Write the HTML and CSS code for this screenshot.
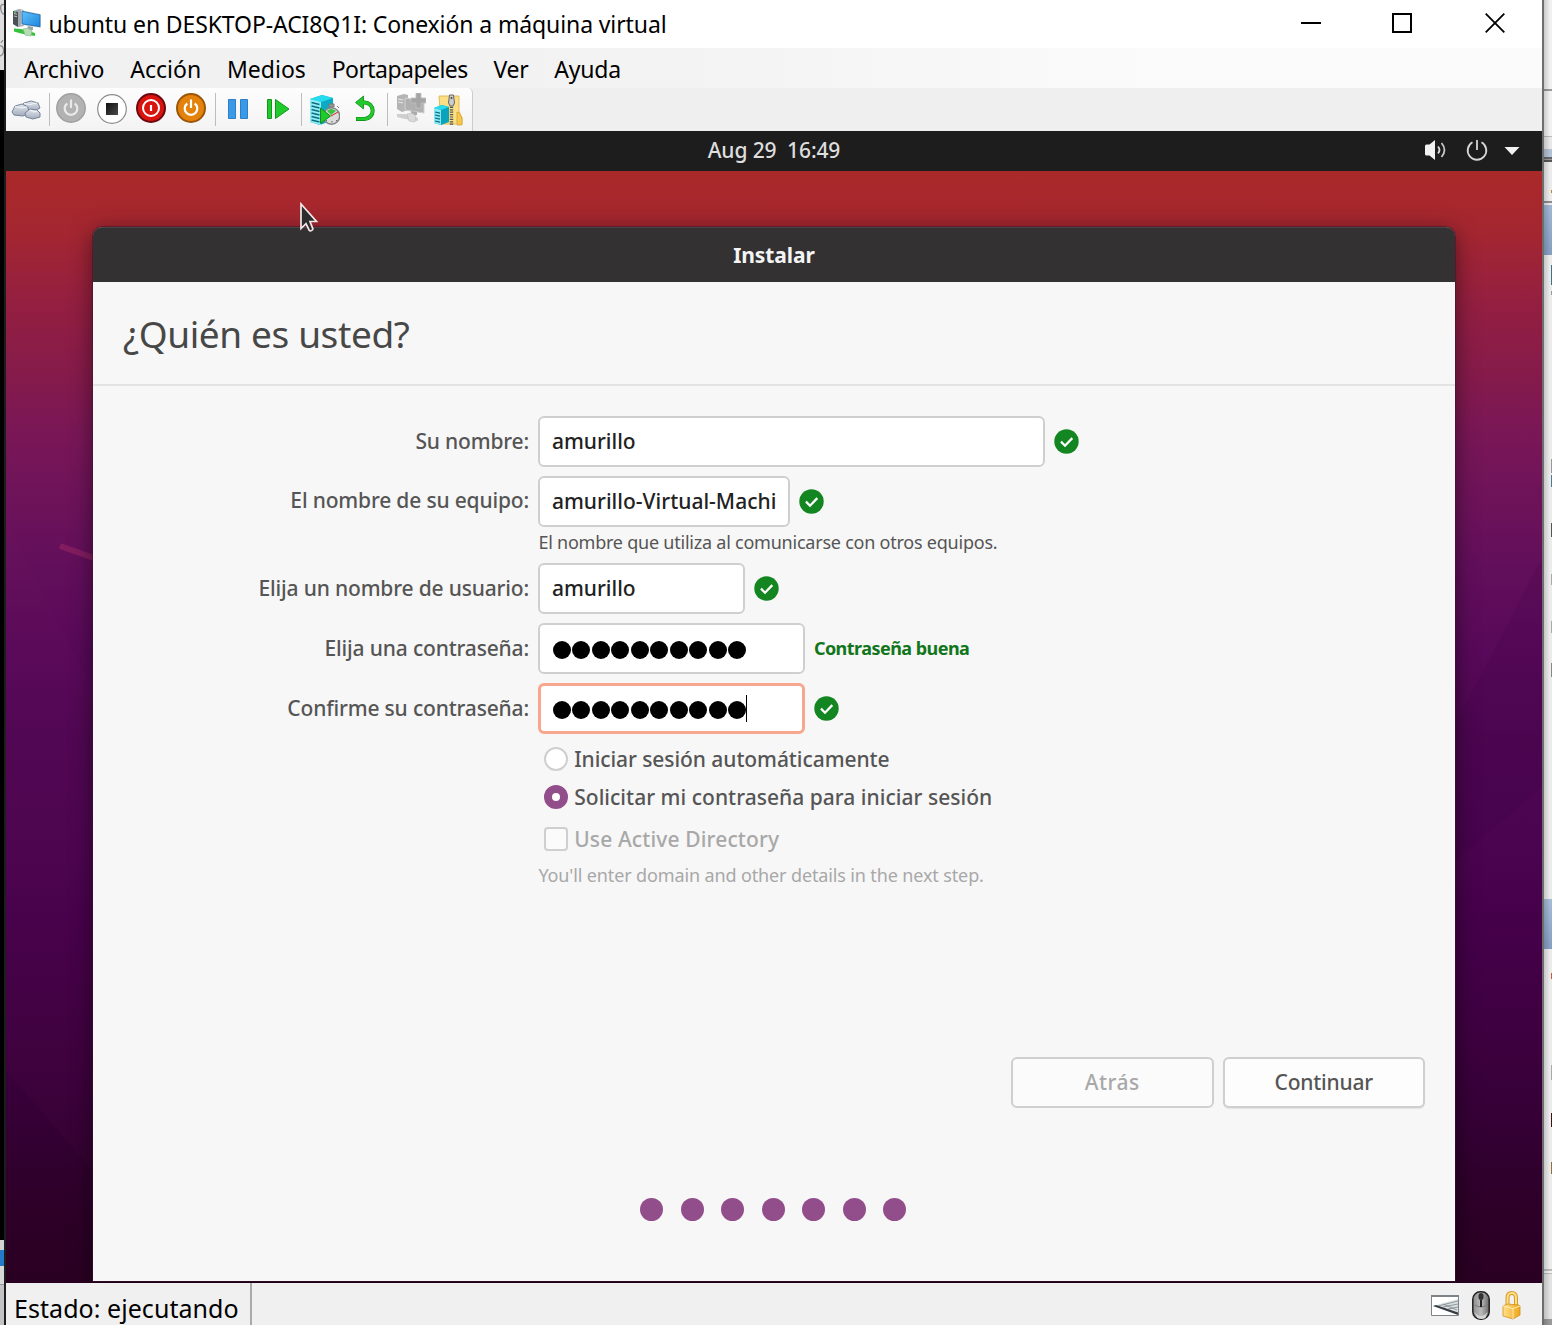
FILE: index.html
```html
<!DOCTYPE html>
<html lang="es">
<head>
<meta charset="utf-8">
<title>ubuntu en DESKTOP-ACI8Q1I: Conexión a máquina virtual</title>
<link rel="stylesheet" href="styles.css">
</head>
<body>
<svg class="defs" aria-hidden="true">
  <defs>
    <linearGradient id="screen" x1="0" y1="0" x2="1" y2="1"><stop offset="0" stop-color="#63c1fa"/><stop offset="1" stop-color="#1c86e0"/></linearGradient>
    <linearGradient id="gold" x1="0" x2="1"><stop offset="0" stop-color="#ffe08a"/><stop offset="1" stop-color="#f0a51c"/></linearGradient>
    <linearGradient id="steel" x1="0" x2="1"><stop offset="0" stop-color="#8d8d8d"/><stop offset=".5" stop-color="#bcbcbc"/><stop offset="1" stop-color="#6a6a6a"/></linearGradient>
    <linearGradient id="rock" x1="0" y1="0" x2="0" y2="1"><stop offset="0" stop-color="#e4e8ef"/><stop offset="1" stop-color="#a3acbc"/></linearGradient>
    <linearGradient id="stopfill" x1="0" y1="0" x2="1" y2="1"><stop offset="0" stop-color="#111"/><stop offset="1" stop-color="#4a4a4a"/></linearGradient>
    <symbol id="check" viewBox="0 0 25 25"><circle cx="12.5" cy="12.5" r="12.2" fill="#138622"/><path d="M7 12.6l4 4.1 7.3-7.6" fill="none" stroke="#fff" stroke-width="2.3"/></symbol>
  </defs>
</svg>
<div class="screen">
  <div class="behind behind-left">
    <div class="peek"><svg width="4" height="70" viewBox="0 0 4 70"><path d="M4 4.500Q0 4 .8 9T4 14M0 46q3-1 3.500 4T0 56M1 43l2-3" fill="none" stroke="#8a8a8a" stroke-width="1.300"/></svg></div>
    <div class="black"></div>
    <div class="pale"></div>
    <div class="blue"></div>
    <div class="pale2"></div>
    <div class="grey"></div>
  </div>
  <main class="window">
    <header class="titlebar">
      <svg class="app-icon" width="28" height="28" viewBox="0 0 28 28">
        <path d="M0 2l6-2 5 1v16l-6 1-5-3z" fill="#a3a9ad"/><path d="M0 2l5 1v15l-5-3z" fill="#4a5054"/><path d="M1 4.500l3 .7M1 7l3 .7" stroke="#b8c4ca" stroke-width="1"/><circle cx="2" cy="3" r=".8" fill="#6f6"/>
        <path d="M8 1l20 4v14l-20-3z" fill="#d5dde2"/><path d="M9 2.300l18 3.600v11.800l-18-2.800z" fill="url(#screen)" stroke="#1766a8" stroke-width=".8"/>
        <path d="M15 17l5 1v3h-6z" fill="#9aa3a8"/>
        <path d="M1 19.500l7 .5 14 4v3l-14-2.500-7-2z" fill="#35c13c"/><path d="M10 20l5-1 4 3-1 5-6-1z" fill="#b5dcb2" stroke="#7fb47d" stroke-width=".6"/>
      </svg>
      <h1><span class="t t-title">ubuntu en DESKTOP-ACI8Q1I: Conexión a máquina virtual</span></h1>
      <div class="controls">
        <svg width="20" height="20" viewBox="0 0 20 20"><path d="M0 10h20" stroke="#000" stroke-width="2"/></svg>
        <svg width="20" height="20" viewBox="0 0 20 20"><path d="M1 1h18v18H1z" fill="none" stroke="#000" stroke-width="2"/></svg>
        <svg width="20" height="20" viewBox="0 0 20 20"><path d="M.7.700l18.600 18.600M19.300.700L.7 19.300" stroke="#000" stroke-width="1.800"/></svg>
      </div>
    </header>
    <nav class="menubar">
      <span class="t t-archivo">Archivo</span><span class="t t-accion">Acción</span><span class="t t-medios">Medios</span><span class="t t-porta">Portapapeles</span><span class="t t-ver">Ver</span><span class="t t-ayuda">Ayuda</span>
    </nav>
    <div class="toolbar">
      <div class="tools">
        <svg class="i-keys" width="30" height="30" viewBox="0 0 30 30"><g fill="url(#rock)" stroke="#76839a" stroke-width="1" stroke-linejoin="round"><path d="M11 11l2-2 7-2 7 2 2 5-6 3-11-2z"/><path d="M1 18l3-6 7-2 6 3 1 6-6 3-9-1z"/><path d="M14 19l5-4 7 1 3 3v4l-7 2-7-2z"/></g><path d="M4 12.500l7 1.500 5-1M13 9.500l6 1 7-1.500M19 16l4 2 3-1" fill="none" stroke="#f3f6fa" stroke-width="1"/></svg>
        <i class="sep s1"></i>
        <svg class="i-start" width="30" height="30" viewBox="0 0 30 30"><circle cx="15" cy="15" r="14.200" fill="#b2b2b2" stroke="#a0a0a0" stroke-width="1.500"/><path d="M11.300 10.500a6.300 6.300 0 1 0 7.400 0M15 6.500v8.500" fill="none" stroke="#e9e9e9" stroke-width="2.200"/></svg>
        <svg class="i-stop" width="30" height="30" viewBox="0 0 30 30"><circle cx="15" cy="15" r="14.300" fill="#fff" stroke="#8c8c8c" stroke-width="1.200"/><path d="M9 9h12v12H9z" fill="url(#stopfill)"/></svg>
        <svg class="i-off" width="30" height="30" viewBox="0 0 30 30"><circle cx="15" cy="15" r="14" fill="#d9140e" stroke="#6d0710" stroke-width="2"/><circle cx="15" cy="15" r="8" fill="none" stroke="#fff" stroke-width="2"/><path d="M15 12v6" stroke="#fff" stroke-width="2.200"/></svg>
        <svg class="i-save" width="30" height="30" viewBox="0 0 30 30"><circle cx="15" cy="15" r="14" fill="#e4820b" stroke="#9c5607" stroke-width="2"/><path d="M11.300 10.500a6.300 6.300 0 1 0 7.400 0M15 6.500v8.500" fill="none" stroke="#fff" stroke-width="2.200"/></svg>
        <i class="sep s2"></i>
        <svg class="i-pause" width="30" height="30" viewBox="0 0 30 30"><path d="M5.500 5.500h7v19h-7zM17.500 5.500h7v19h-7z" fill="#3a9ae8" stroke="#2a80c8"/></svg>
        <svg class="i-play" width="30" height="30" viewBox="0 0 30 30"><path d="M4.500 5.500h4v19h-4zM12.500 5.500l13.500 9.500-13.500 9.500z" fill="#1fcb2b" stroke="#14961d"/></svg>
        <i class="sep s3"></i>
        <svg class="i-check" width="30" height="32" viewBox="0 0 30 32"><path d="M0 5l12-4 11 3v22l-13 5-10-3z" fill="#0cabc5"/><path d="M0 5l12-4 11 3-12 4z" fill="#26dbee"/><path d="M0 5l11 3v23l-11-3z" fill="#8feff8"/><path d="M1.500 8.500l8 2M1.500 12l8 2M1.500 15.500l8 2M1.500 19l8 2M1.500 22.500l8 2M1.500 26l8 2" stroke="#126a7c" stroke-width="1.300"/><path d="M19 10h5v3h-5zM27 12l2 2" fill="#999" stroke="#777"/><circle cx="21.500" cy="22" r="8.200" fill="#dcdcdc" stroke="#858585" stroke-width="1.500"/><path d="M21 21l-4-4q4-4 9 0z" fill="#3bc444"/><path d="M21 22l7-4" stroke="#d22" stroke-width="1"/><path d="M22 27v1.500M26 26l1 1M17 26l-1 1" stroke="#666"/><path d="M10.500 14l10 8-10 7.500z" fill="#1fcb2b" stroke="#128c1b"/></svg>
        <svg class="i-undo" width="30" height="30" viewBox="0 0 30 30"><path d="M9 9.500h5.500a8.200 8.200 0 0 1 0 16.400H6" fill="none" stroke="#12831a" stroke-width="4"/><path d="M5.500 9.500L13.500 3v13z" fill="#1fcb2b" stroke="#12831a" stroke-width=".8"/><path d="M9 9.500h5.500a8.200 8.200 0 0 1 0 16.400H6.500" fill="none" stroke="#1fcb2b" stroke-width="2.800"/></svg>
        <i class="sep s4"></i>
        <svg class="i-enh" width="30" height="30" viewBox="0 0 30 30"><path d="M1 3l7-2 4 1v15l-6 2-5-3z" fill="#b4b4b4"/><path d="M2 6l5 1M2 9l5 1" stroke="#e8e8e8"/><path d="M9 5l19 3v12l-19-3z" fill="#b0b0b0" stroke="#d0d0d0"/><path d="M20 0h5v5h5v5h-5v5h-5v-5h-5V5h5z" fill="#a4a4a4" stroke="#c0c0c0" stroke-width=".8"/><path d="M15 18l6 1v3h-6z" fill="#aaa"/><path d="M1 21l8 0 13 4v3l-13-2-8-2z" fill="#cfcfcf"/><path d="M11 21l5-1 4 3-1 6-6-1z" fill="#d9d9d9" stroke="#bbb" stroke-width=".6"/></svg>
        <svg class="i-share" width="30" height="32" viewBox="0 0 30 32"><path d="M6 2h20v18l3 3v7H8z" fill="#fbdf85" stroke="#e3bb5a"/><path d="M24 18l3 1 2 6v6h-5z" fill="#f5c94e" stroke="#d49b28" stroke-width=".7"/><path d="M18.500 8v23" stroke="#555" stroke-width="3.400" stroke-dasharray="1.200 1.200"/><path d="M16.500 1h4l1 8-1.500 3h-3L15.500 9z" fill="#ccc" stroke="#666"/><circle cx="18.500" cy="4" r="1" fill="#444"/><path d="M1 14l8-3 7 2v15l-8 3-7-2z" fill="#0aa3be"/><path d="M1 14l8-3 7 2-8 3z" fill="#26dbee"/><path d="M1 14l7 2v15l-7-2z" fill="#83eaf5"/><path d="M2 18l5 1.200M2 21l5 1.200M2 24l5 1.200M2 27l5 1.200" stroke="#126a7c" stroke-width="1.200"/></svg>
      </div>
    </div>
    <section class="guest">
      <div class="panel">
        <span class="t t-clock">Aug 29&nbsp; 16:49</span>
        <div class="indicators">
          <svg class="vol" width="24" height="22" viewBox="0 0 24 22"><path d="M1 7q0-1.500 1.500-1.500H5.500L11 1v20l-5.500-4.500H2.500Q1 16.500 1 15z" fill="#f2f2f2"/><path d="M14 7.500q3 3.500 0 7" fill="none" stroke="#ddd" stroke-width="1.800"/><path d="M17.500 4q6 7 0 14" fill="none" stroke="#ccc" stroke-width="1.700"/></svg>
          <svg class="pwr" width="22" height="22" viewBox="0 0 22 22"><path d="M6.500 3.300a9.300 9.300 0 1 0 9 0M11 1v10" fill="none" stroke="#d6d6d6" stroke-width="1.800"/></svg>
          <svg width="16" height="8" viewBox="0 0 16 8"><path d="M.5 0h15L8 8z" fill="#f2f2f2"/></svg>
        </div>
      </div>
      <div class="desktop">
        <svg class="wallpaper" width="1536" height="1112" viewBox="0 0 1536 1112"><path d="M10 370L87 520V690L0 601V350zM0 601L87 690V1000L0 900z" fill="#8a1e62" opacity=".05"/><path d="M1536 387L1450 552V690L1536 615z" fill="#30003c" opacity=".12"/><path d="M54 375L88 387" stroke="#821d60" stroke-width="6"/></svg>
        <div class="dialog">
          <div class="dialog-title"><span class="t t-inst">Instalar</span></div>
          <div class="heading"><h2><span class="t t-head">¿Quién es usted?</span></h2></div>
          <form class="form">
            <label class="r1"><span class="t t-l1">Su nombre:</span></label>
            <div class="ctl"><div class="field w1"><span class="t t-f1">amurillo</span></div><svg class="ok"><use href="#check"/></svg></div>
            <label class="r2"><span class="t t-l2">El nombre de su equipo:</span></label>
            <div class="ctl"><div class="field w2"><span class="t t-f2">amurillo-Virtual-Machi</span></div><svg class="ok"><use href="#check"/></svg></div>
            <p class="hint name-hint"><span class="t t-h1">El nombre que utiliza al comunicarse con otros equipos.</span></p>
            <label><span class="t t-l3">Elija un nombre de usuario:</span></label>
            <div class="ctl"><div class="field w3"><span class="t t-f1">amurillo</span></div><svg class="ok"><use href="#check"/></svg></div>
            <label><span class="t t-l4">Elija una contraseña:</span></label>
            <div class="ctl"><div class="field w4"><b class="pw"><i></i><i></i><i></i><i></i><i></i><i></i><i></i><i></i><i></i><i></i></b></div><span class="t t-good">Contraseña buena</span></div>
            <label><span class="t t-l5">Confirme su contraseña:</span></label>
            <div class="ctl"><div class="field w4 focus"><b class="pw"><i></i><i></i><i></i><i></i><i></i><i></i><i></i><i></i><i></i><i></i></b><u class="caret"></u></div><svg class="ok"><use href="#check"/></svg></div>
            <div class="option"><span class="radio"></span><span class="t t-o1">Iniciar sesión automáticamente</span></div>
            <div class="option"><span class="radio on"></span><span class="t t-o2">Solicitar mi contraseña para iniciar sesión</span></div>
            <div class="option off"><span class="box"></span><span class="t t-o3">Use Active Directory</span></div>
            <p class="hint off"><span class="t t-h2">You'll enter domain and other details in the next step.</span></p>
          </form>
          <div class="actions"><div class="btn disabled"><span class="t t-b1">Atrás</span></div><div class="btn"><span class="t t-b2">Continuar</span></div></div>
          <div class="dots"><i></i><i></i><i></i><i></i><i></i><i></i><i></i></div>
        </div>
        <svg class="pointer" width="22" height="32" viewBox="0 0 22 32"><path d="M2 2v24.500l5-4.800 3.200 6.500c1 1.300 4 .2 3.600-1.600L11 19.500H17.500z" fill="#2c2c2c" stroke="#f3e8e8" stroke-width="1.700"/></svg>
      </div>
    </section>
    <footer class="status">
      <div class="state"><span class="t t-state">Estado: ejecutando</span></div>
      <div class="tray">
        <svg width="28" height="21" viewBox="0 0 28 21"><path d="M.5.500h27v20H.5z" fill="#fff" stroke="#7d8386"/><path d="M0 1h28" stroke="#7d8386" stroke-width="2"/><path d="M2 11l25-7v14z" fill="#d9dee1"/><path d="M7 11l20-5M12 12l15-3M17 14l10-2M12 9l14 6" stroke="#7d868c" stroke-width=".8"/><path d="M2 11l3-1 22 7.500v2.500z" fill="#353d43"/></svg>
        <svg width="18" height="29" viewBox="0 0 18 29"><rect x=".8" y=".8" width="16.400" height="27.400" rx="7.500" fill="url(#steel)" stroke="#222" stroke-width="1.500"/><path d="M2.500 21q6.500 8 13 0l-2 6q-4 2-8 0z" fill="#d5d5d5"/><path d="M3 14q6 4 12 0" fill="none" stroke="#777"/><rect x="6.500" y="2" width="5" height="7" rx="2.500" fill="#333"/><path d="M9 9v7" stroke="#222" stroke-width="2"/></svg>
        <svg width="19" height="29" viewBox="0 0 19 29"><path d="M5.500 15V7q0-5 4.200-5T14 7v8" fill="none" stroke="#d99a1f" stroke-width="4"/><path d="M5.500 15V7q0-5 4.200-5T14 7v8" fill="none" stroke="#ffe08a" stroke-width="2"/><path d="M1 15l4-2 12 1 1 1v9l-7 4-10-3z" fill="url(#gold)" stroke="#d0901a" stroke-width=".8"/><path d="M1 15l10 2.500v10.500M11 17.500l7-2.500" fill="none" stroke="#fff0b8" stroke-width=".9"/></svg>
      </div>
    </footer>
  </main>
  <div class="behind behind-right"><i class="slivers"></i></div>
</div>
</body>
</html>
```
FILE: styles.css
```css
* { box-sizing: border-box; }
body { margin: 0; font-family: "Noto Sans", "Open Sans", sans-serif; color: #000; }
h1, h2, p { margin: 0; font-weight: 400; }
svg { display: block; flex: none; }
.defs { position: absolute; width: 0; height: 0; }
.t { display: inline-block; white-space: nowrap; }
.screen { display: flex; width: 1552px; height: 1325px; overflow: hidden; }

/* Windows that show behind the virtual machine window */
.behind { flex: none; height: 1325px; }
.behind-left { display: flex; flex-direction: column; width: 6px; border-right: 2px solid #1d1d1d; }
.peek { height: 70px; background: #dedede; }
.black { flex: 1; background: #000; }
.pale { height: 10px; background: #d2d2d2; }
.blue { height: 16px; background: #2479c8; }
.pale2 { height: 19px; background: #d8d8d8; border-bottom: 1px solid #999; }
.grey { height: 40px; background: #c2c3c5; }
.behind-right {
  display: flex;
  justify-content: flex-end;
  width: 10px;
  border-left: 2px solid #6e6e6e;
  background: linear-gradient(90deg, rgba(0, 0, 0, .16), transparent 6px), linear-gradient(#f1f1f1 0 89px, #999 89px 91px, #f2f2f2 91px 136px, #bbb 136px 137px, #e8e8e8 137px 149px, #b3c2d6 149px 157px, #666 157px 159px, #999 159px 160px, #555 160px 162px, #ececec 162px 201px, #8b8b8b 201px 203px, #e9e9e9 203px 205px, #a1b6d5 205px, #859ec1 255px, #ececec 255px 899px, #a7bcd8 899px, #859ec2 949px, #ececec 949px 1269px, #bbb 1269px 1271px, #f2f2f2 1271px 1273px, #bbb 1273px 1274px, #e2e2e2 1274px 1319px, #999 1319px);
}
.slivers {
  width: 1px;
  height: 1325px;
  background: linear-gradient(transparent 190px, #b98a2e 190px 193px, transparent 193px 265px, #3f7388 265px 285px, transparent 285px 291px, #999 291px 295px, transparent 295px 459px, #999 459px 473px, transparent 473px 475px, #4a7d96 475px 487px, transparent 487px 523px, #555 523px 537px, transparent 537px 574px, #aaa 574px 585px, transparent 585px 621px, #aaa 621px 633px, transparent 633px 663px, #888 663px 677px, transparent 677px 973px, #c0603a 973px 979px, transparent 979px 1065px, #aaa 1065px 1080px, transparent 1080px 1113px, #421018 1113px 1127px, transparent 1127px 1162px, #93713a 1162px 1174px, transparent 1174px);
}

/* Host window */
.window { width: 1536px; display: flex; flex-direction: column; flex: none; }
.titlebar { height: 48px; display: flex; align-items: center; background: #fff; padding-left: 7px; }
.app-icon { margin-top: -3px; }
.titlebar h1 { margin-left: 7.500px; font-size: 23px; line-height: 32px; }
.controls { margin-left: auto; display: flex; padding-right: 37px; margin-top: -2px; gap: 71px; }
.controls svg:last-child { margin-left: 2px; }
.t-title { letter-spacing: -.11px; }
.menubar { height: 40px; display: flex; align-items: center; padding: 2px 0 0 18px; gap: 25.800px; font-size: 23px; line-height: 32px; background: linear-gradient(90deg, #f0f0f0, #f3f3f3 45%, #fbfbfb 75%, #fbfbfb); }
.t-porta { letter-spacing: -.54px; }
.t-ver { letter-spacing: -.3px; }
.t-ayuda { letter-spacing: -.2px; }
.toolbar { height: 43px; background: #efefef; }
.tools { width: 467px; height: 43px; display: flex; align-items: center; padding-left: 5px; background: linear-gradient(#fdfdfd, #f3f3f3); border-right: 1px solid #ccc; border-radius: 0 5px 0 0; }
.tools svg { margin-top: -3px; }
.tools .i-keys { margin-top: -1px; }
.sep { width: 1px; height: 33px; background: #bdbdbd; }
.s1 { margin-left: 8px; }
.tools .i-start { margin-left: 6px; }
.tools .i-stop { margin-left: 11px; margin-top: -1px; }
.tools .i-off { margin-left: 9px; }
.tools .i-save { margin-left: 10px; }
.s2 { margin-left: 9px; }
.tools .i-pause { margin-left: 7px; margin-top: -1px; }
.tools .i-play { margin-left: 10px; margin-top: -1px; }
.s3 { margin-left: 8px; }
.tools .i-check { margin-left: 8px; margin-top: 0; }
.tools .i-undo { margin-left: 10px; }
.s4 { margin-left: 7px; }
.tools .i-enh { margin-left: 8px; }
.tools .i-share { margin-left: 7px; margin-top: 0; }

/* Guest desktop */
.panel { height: 40px; background: #1d1d1d; color: #dedede; display: grid; place-items: center; font-size: 21px; line-height: 30px; }
.panel > * { grid-area: 1 / 1; }
.t-clock { letter-spacing: -.12px; margin-top: -2px; font-weight: 500; }
.indicators { justify-self: end; display: flex; align-items: center; padding-right: 22px; }
.vol { margin: -2px 18px 0 0; }
.pwr { margin: -2px 16px 0 0; }
.desktop { position: relative; height: 1112px; padding: 56px 0 0 87px; overflow: hidden; background: linear-gradient(#aa2929, #a42630 60px, #941f40 130px, #861b4a 200px, #7a1756 259px, #711459 310px, #630f5b 390px, #580959 480px, #4f0653 570px, #4a044f 690px, #45004a 750px, #3e0040 860px, #350036 946px, #2e002a 1020px, #2a0022); }
.wallpaper { position: absolute; left: 0; top: 0; }
.pointer { position: absolute; left: 293px; top: 31px; }
.dialog { position: relative; width: 1362px; height: 1054px; display: flex; flex-direction: column; background: #f7f7f7; border-radius: 10px 10px 0 0; box-shadow: 0 0 0 1px rgba(60, 20, 50, .5), 0 5px 22px rgba(0, 0, 0, .5); color: #555; }
.dialog-title { height: 55px; background: #333132; border-top: 1px solid #484646; border-radius: 9px 9px 0 0; color: #f4f4f4; font-weight: 700; display: grid; place-items: center; font-size: 21px; line-height: 30px; letter-spacing: -.1px; }
.heading { height: 104px; border-bottom: 2px solid #e3e3e3; padding: 1px 0 0 30px; display: flex; align-items: center; color: #474747; }
.heading h2 { font-size: 37px; line-height: 54px; letter-spacing: -.38px; }
.form { margin-top: 30px; display: grid; grid-template-columns: 436px 1fr; column-gap: 9.400px; grid-template-rows: 60px 60px 27px 60px 60px 61px 37.500px 42px 35px 30px; align-items: start; font-size: 21px; line-height: 30px; font-weight: 500; letter-spacing: -.17px; }
.form label { text-align: right; height: 51px; padding-top: 10px; }
.form label.r2 { padding-top: 9px; }
.ctl { display: flex; align-items: center; gap: 9px; height: 51px; }
.field { height: 51px; border: 2px solid #cfcfcf; border-radius: 6px; background: #fff; color: #222; display: flex; align-items: center; padding-left: 11.500px; }
.field .t { margin-top: -2px; }
.w1 { width: 506.500px; }
.w2 { width: 251.500px; }
.w3 { width: 206.500px; }
.w4 { width: 266.500px; }
.field.focus { border: 3px solid #f6a78d; padding-left: 10.500px; }
.ok { width: 25px; height: 25px; }
.pw { display: flex; gap: 1.500px; margin: 3px 0 0 1px; }
.pw i { width: 18px; height: 18px; border-radius: 50%; background: #000; }
.caret { width: 1px; height: 27px; background: #000; margin-left: 0; }
.hint, .option { grid-column: 2; }
.hint { font-size: 18px; line-height: 26px; margin-top: 3px; font-weight: 400; }
.name-hint { margin-top: -7px; }
.option { display: flex; align-items: center; height: 30px; gap: 6px; padding-left: 5.800px; }
.radio, .box { width: 24px; height: 24px; border: 2px solid #cfcfcf; background: #fff; border-radius: 50%; }
.radio.on { border: 8px solid #924d8b; }
.box { border-radius: 4px; background: #fbfbfb; }
.off { color: #a8a8a8; }
.t-f1 { letter-spacing: 0; }
.t-f2 { letter-spacing: .02px; }
.t-h1 { letter-spacing: -.23px; }
.t-h2 { letter-spacing: -.13px; }
.t-o1 { letter-spacing: -.07px; }
.t-o2 { letter-spacing: .03px; }
.t-o3 { letter-spacing: .14px; }
.t-good { color: #11761b; font-weight: 700; font-size: 18px; letter-spacing: -.54px; margin-top: -2px; }
.actions { margin-top: auto; display: flex; justify-content: flex-end; gap: 9px; padding-right: 30px; font-size: 21px; }
.btn { width: 202.500px; height: 51px; border: 2px solid #cfcfcf; border-radius: 6px; background: #fdfdfd; display: grid; place-items: center; font-weight: 500; box-shadow: 0 1px 1px #e4e4e4; }
.btn.disabled { background: #fbfbfb; color: #a8a8a8; box-shadow: none; }
.t-b1 { letter-spacing: .5px; }
.t-b2 { letter-spacing: -.2px; }
.dots { display: flex; justify-content: center; gap: 17.500px; margin: 90px 0 60.500px; padding-right: 2px; }
.dots i { width: 23px; height: 23px; border-radius: 50%; background: #924d8b; }
.status { height: 42px; background: #f0f0f0; display: flex; align-items: center; }
.state { height: 42px; width: 246px; padding: 8px 0 0 8px; border-right: 2px solid #aaa; font-size: 25px; line-height: 34px; }
.t-state { letter-spacing: .05px; }
.tray { margin-left: auto; display: flex; align-items: center; gap: 12.500px; padding: 3px 21px 0 0; }
```
